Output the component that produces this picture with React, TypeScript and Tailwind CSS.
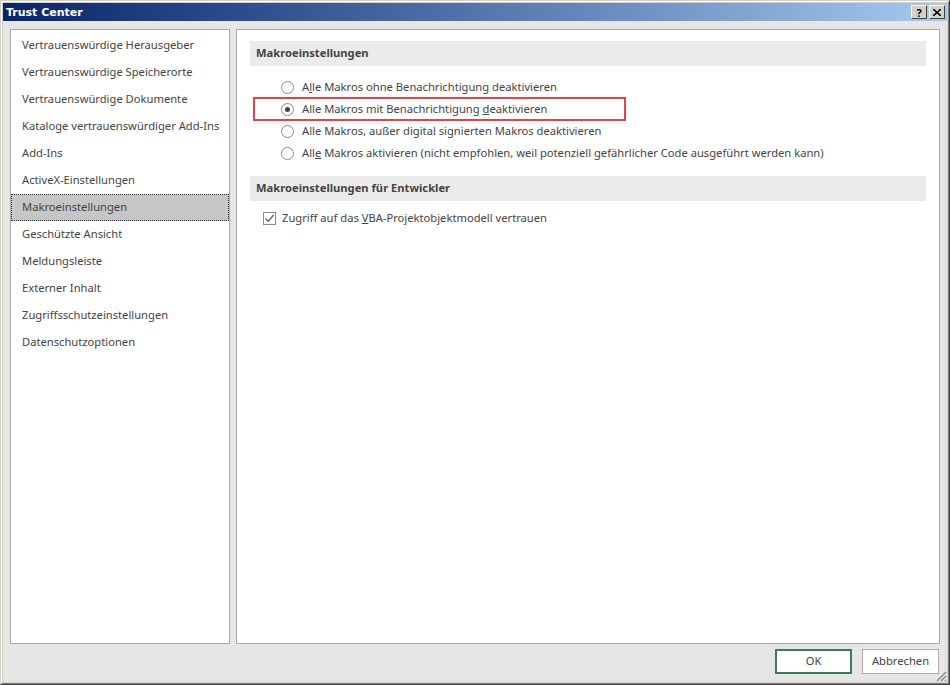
import React from "react";

const font = { fontFamily: '"Noto Sans", "Open Sans", sans-serif' };

const items = [
  "Vertrauenswürdige Herausgeber",
  "Vertrauenswürdige Speicherorte",
  "Vertrauenswürdige Dokumente",
  "Kataloge vertrauenswürdiger Add-Ins",
  "Add-Ins",
  "ActiveX-Einstellungen",
  "Makroeinstellungen",
  "Geschützte Ansicht",
  "Meldungsleiste",
  "Externer Inhalt",
  "Zugriffsschutzeinstellungen",
  "Datenschutzoptionen",
];

function Radio({ checked }: { checked?: boolean }) {
  return (
    <span className="w-[13px] h-[13px] rounded-full border border-[#8a8a8a] bg-white flex items-center justify-center shrink-0">
      {checked && <span className="w-[5px] h-[5px] rounded-full bg-[#444]" />}
    </span>
  );
}

function TitleButton({ children }: { children: React.ReactNode }) {
  return (
    <div className="w-[16px] h-[14px] bg-[#d4d0c8] border-t border-l border-t-white border-l-white border-b border-r border-b-[#404040] border-r-[#404040] flex items-center justify-center text-black text-[11px] font-bold leading-none">
      {children}
    </div>
  );
}

export default function App() {
  return (
    <div
      className="w-[950px] h-[685px] flex flex-col bg-[#d4d0c8] border-t border-l border-t-[#d4d0c8] border-l-[#d4d0c8] border-b border-r border-b-[#404040] border-r-[#404040]"
      style={font}
    >
      <div className="flex flex-col flex-1 border-t border-l border-t-white border-l-white border-b border-r border-b-[#808080] border-r-[#808080] p-px">
        {/* title bar */}
        <div className="h-[18px] flex items-center justify-between pl-[3px] pr-[2px] bg-gradient-to-r from-[#0a246a] to-[#a6caf0]">
          <span className="text-white font-bold leading-none" style={{ fontFamily: '"DejaVu Sans", "Noto Sans", sans-serif', fontSize: "11px" }}>
            Trust Center
          </span>
          <div className="flex gap-[2px]">
            <TitleButton>?</TitleButton>
            <TitleButton>
              <svg width="8" height="7" viewBox="0 0 8 7">
                <path d="M0 0 L8 7 M8 0 L0 7" stroke="black" strokeWidth="1.6" />
              </svg>
            </TitleButton>
          </div>
        </div>
        {/* content */}
        <div className="flex-1 bg-[#e6e6e6] flex flex-col pl-[7px] pr-[7px] pt-[8px] relative text-[11.2px] whitespace-nowrap">
          <div className="flex gap-[6px] h-[615px]">
            {/* left list */}
            <div className="w-[220px] h-full bg-white border border-[#a9a9a9] pt-[2px]">
              {items.map((it) => {
                const sel = it === "Makroeinstellungen";
                return (
                  <div
                    key={it}
                    className={
                      "h-[27px] flex items-center text-[#444] " +
                      (sel ? "bg-[#c6c6c6] border border-dotted border-[#333] pl-[10px]" : "pl-[11px]")
                    }
                  >
                    {it}
                  </div>
                );
              })}
            </div>
            {/* right panel */}
            <div className="flex-1 h-full bg-white border border-[#a9a9a9] pt-[11px] pl-[13px] pr-[13px]">
              <div className="h-[25px] bg-[#ebebeb] flex items-center pl-[6px] font-bold text-[#444]">
                Makroeinstellungen
              </div>
              <div className="mt-[10px] flex flex-col relative">
                <div className="h-[22px] flex items-center gap-[8px] pl-[31px] text-[#444]">
                  <Radio />
                  <span>
                    A<u>l</u>le Makros ohne Benachrichtigung deaktivieren
                  </span>
                </div>
                <div className="h-[22px] flex items-center gap-[8px] pl-[31px] text-[#444] relative">
                  <Radio checked />
                  <span>
                    Alle Makros mit Benachrichtigung <u>d</u>eaktivieren
                  </span>
                  <div className="absolute left-[3px] top-[-1px] w-[373px] h-[24px] border-2 border-[#e8414b]" />
                </div>
                <div className="h-[22px] flex items-center gap-[8px] pl-[31px] text-[#444]">
                  <Radio />
                  <span>Alle Makros, außer digital signierten Makros deaktivieren</span>
                </div>
                <div className="h-[22px] flex items-center gap-[8px] pl-[31px] text-[#444]">
                  <Radio />
                  <span>
                    All<u>e</u> Makros aktivieren (nicht empfohlen, weil potenziell gefährlicher Code ausgeführt werden kann)
                  </span>
                </div>
              </div>
              <div className="mt-[12px] h-[25px] bg-[#ebebeb] flex items-center pl-[6px] font-bold text-[#444]">
                Makroeinstellungen für Entwickler
              </div>
              <div className="mt-[6px] h-[22px] flex items-center gap-[6px] pl-[13px] text-[#444]">
                <span className="w-[13px] h-[13px] border border-[#8a8a8a] bg-white flex items-center justify-center shrink-0">
                  <svg width="11" height="11" viewBox="0 0 11 11">
                    <path d="M1.5 5.5 L4.2 8.3 L9.5 2" stroke="#555" strokeWidth="1.2" fill="none" />
                  </svg>
                </span>
                <span>
                  Zugriff auf das <u>V</u>BA-Projektobjektmodell vertrauen
                </span>
              </div>
            </div>
          </div>
          {/* buttons */}
          <div className="flex justify-end gap-[10px] mt-[5px] pr-px">
            <button className="w-[77px] h-[25px] bg-white border-2 border-[#3b7d58] text-[#444]">
              OK
            </button>
            <button className="w-[77px] h-[25px] bg-white border border-[#adadad] text-[#444]">
              Abbrechen
            </button>
          </div>
          <svg className="absolute right-0 bottom-0" width="12" height="12" viewBox="0 0 12 12">
            <path d="M11 2 L2 11 M11 6 L6 11 M11 10 L10 11" stroke="#808080" strokeWidth="1.2" />
          </svg>
        </div>
      </div>
    </div>
  );
}
